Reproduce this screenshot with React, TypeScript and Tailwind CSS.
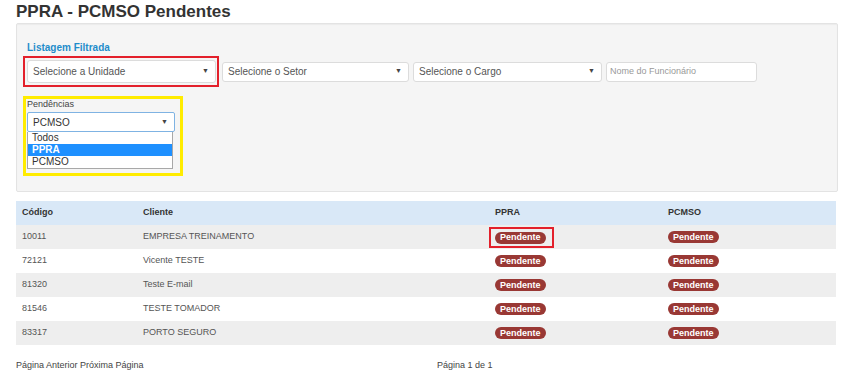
import { clsx } from "clsx";

const rows = [
  { code: "10011", client: "EMPRESA TREINAMENTO" },
  { code: "72121", client: "Vicente TESTE" },
  { code: "81320", client: "Teste E-mail" },
  { code: "81546", client: "TESTE TOMADOR" },
  { code: "83317", client: "PORTO SEGURO" },
];

const Badge = () => (
  <span className="inline-flex h-[12px] items-center rounded-full bg-[#993834] px-[5px] text-[9px] font-bold leading-none text-white">
    Pendente
  </span>
);

const FakeSelect = ({ label, className }: { label: string; className?: string }) => (
  <div
    className={clsx(
      "flex items-center justify-between rounded-[3px] border border-[#dcdcdc] bg-white pl-[5px] pr-[6px] text-[10px] text-[#555]",
      className
    )}
  >
    <span>{label}</span>
    <span className="text-[7px] text-[#444]">▼</span>
  </div>
);

export default function App() {
  return (
    <div className="h-[374px] w-[850px] bg-white px-[16px] font-['Liberation_Sans',Arial,sans-serif] text-[#333]">
      <h1 className="h-[23px] pt-[2px] text-[17px] font-bold leading-[20px] text-[#333]">
        PPRA - PCMSO Pendentes
      </h1>

      {/* painel de filtros */}
      <div className="h-[169px] w-[822px] rounded-[2px] border border-[#e3e3e3] bg-[#f5f5f5] pl-[6px] pt-[18px] shadow-[inset_0_1px_1px_rgba(0,0,0,0.04)]">
        <div className="pl-[4px] text-[10px] font-bold leading-[12px] text-[#1f8dcb]">
          Listagem Filtrada
        </div>

        <div className="mt-[2px] flex items-center gap-[3px]">
          <div className="h-[31px] w-[196px] border-2 border-[#e3202b] py-[2px] pl-[2px] pr-[1px]">
            <FakeSelect label="Selecione a Unidade" className="h-[23px] w-[189px]" />
          </div>
          <FakeSelect label="Selecione o Setor" className="h-[20px] w-[187px]" />
          <FakeSelect label="Selecione o Cargo" className="ml-[1px] h-[20px] w-[189px]" />
          <div className="ml-[1px] flex h-[20px] w-[151px] items-center rounded-[3px] border border-[#dcdcdc] bg-white pl-[3px] text-[9px] text-[#999]">
            Nome do Funcionário
          </div>
        </div>

        <div className="mt-[9px] h-[80px] w-[160px] border-[3px] border-[#ffec00] pl-[1px]">
          <div className="text-[9px] leading-[10px] text-[#444]">Pendências</div>
          <div className="mt-[3px] flex h-[20px] w-[148px] items-center justify-between rounded-[2px] border border-[#7fb3e3] bg-white pl-[5px] pr-[6px] text-[10px] text-[#333]">
            <span>PCMSO</span>
            <span className="text-[7px] text-[#444]">▼</span>
          </div>
          <div className="w-[146px] border border-t-0 border-[#a8a8a8] bg-white text-[10px] leading-[12px] text-[#333]">
            <div className="pl-[4px]">Todos</div>
            <div className="bg-[#1e90ff] pl-[4px] font-bold text-white">PPRA</div>
            <div className="pl-[4px]">PCMSO</div>
          </div>
        </div>
      </div>

      {/* tabela */}
      <div className="mt-[9px] w-[820px] text-[9px]">
        <div className="grid h-[24px] grid-cols-[121px_352px_173px_174px] items-center bg-[#d9e8f7] font-bold text-[#333]">
          <div className="pl-[6px]">Código</div>
          <div className="pl-[6px]">Cliente</div>
          <div className="pl-[6px]">PPRA</div>
          <div className="pl-[6px]">PCMSO</div>
        </div>
        {rows.map((r, i) => (
          <div
            key={r.code}
            className={clsx(
              "grid h-[24px] grid-cols-[121px_352px_173px_174px] items-center text-[#555]",
              i % 2 === 0 ? "bg-[#eeeeee]" : "bg-white"
            )}
          >
            <div className="pl-[6px]">{r.code}</div>
            <div className="pl-[6px]">{r.client}</div>
            {i === 0 ? (
              <div className="flex">
                <div className="flex h-[21px] items-start border-2 border-[#e3202b] pl-[4px] pr-[6px] pt-[3px]">
                  <Badge />
                </div>
              </div>
            ) : (
              <div className="flex pl-[6px]">
                <Badge />
              </div>
            )}
            <div className="flex pl-[6px]">
              <Badge />
            </div>
          </div>
        ))}
      </div>

      <div className="mt-[14px] flex text-[9px] leading-[12px] text-[#444]">
        <span className="w-[421px]">Página Anterior Próxima Página</span>
        <span>Página 1 de 1</span>
      </div>
    </div>
  );
}
